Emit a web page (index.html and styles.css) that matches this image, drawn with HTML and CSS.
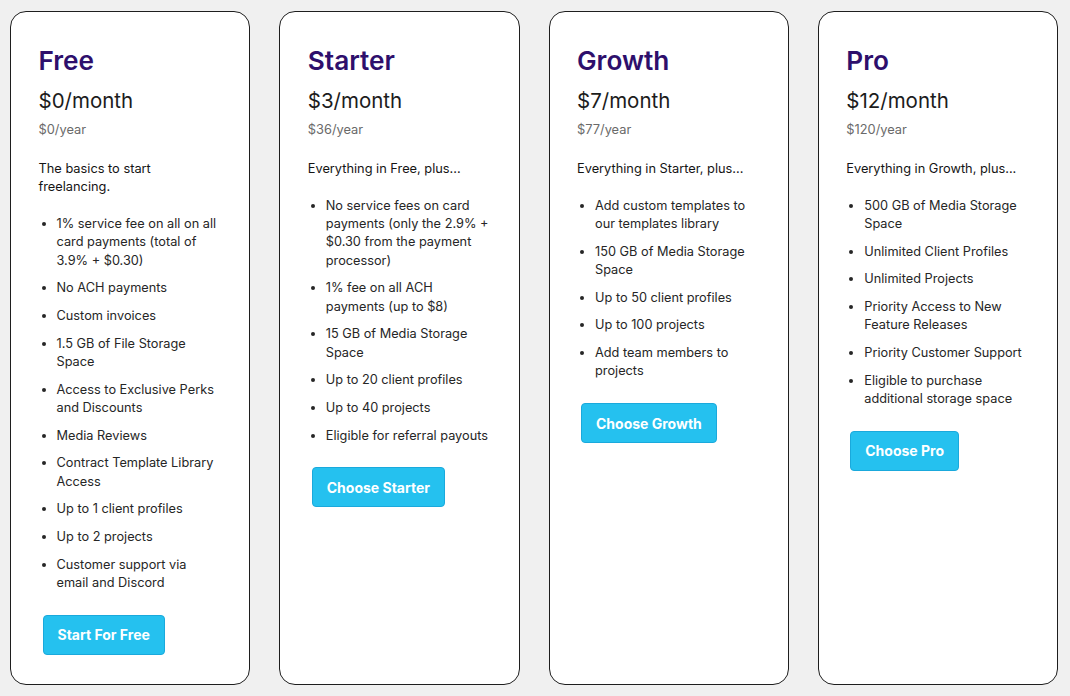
FILE: index.html
```html
<!DOCTYPE html>
<html lang="en">
<head>
<meta charset="utf-8">
<title>Pricing</title>
<link rel="stylesheet" href="styles.css">
</head>
<body>
<main class="plans">
  <section class="card">
    <h2 class="name">Free</h2>
    <p class="price">$0/month</p>
    <p class="year">$0/year</p>
    <p class="desc">The basics to start freelancing.</p>
    <ul class="features">
      <li>1% service fee on all on all card payments (total of 3.9% + $0.30)</li>
      <li>No ACH payments</li>
      <li>Custom invoices</li>
      <li>1.5 GB of File Storage Space</li>
      <li>Access to Exclusive Perks and Discounts</li>
      <li>Media Reviews</li>
      <li>Contract Template Library Access</li>
      <li>Up to 1 client profiles</li>
      <li>Up to 2 projects</li>
      <li>Customer support via email and Discord</li>
    </ul>
    <button class="cta">Start For Free</button>
  </section>
  <section class="card">
    <h2 class="name">Starter</h2>
    <p class="price">$3/month</p>
    <p class="year">$36/year</p>
    <p class="desc">Everything in Free, plus...</p>
    <ul class="features">
      <li>No service fees on card payments (only the 2.9% + $0.30 from the payment processor)</li>
      <li>1% fee on all ACH payments (up to $8)</li>
      <li>15 GB of Media Storage Space</li>
      <li>Up to 20 client profiles</li>
      <li>Up to 40 projects</li>
      <li>Eligible for referral payouts</li>
    </ul>
    <button class="cta">Choose Starter</button>
  </section>
  <section class="card">
    <h2 class="name">Growth</h2>
    <p class="price">$7/month</p>
    <p class="year">$77/year</p>
    <p class="desc">Everything in Starter, plus...</p>
    <ul class="features">
      <li>Add custom templates to our templates library</li>
      <li>150 GB of Media Storage Space</li>
      <li>Up to 50 client profiles</li>
      <li>Up to 100 projects</li>
      <li>Add team members to projects</li>
    </ul>
    <button class="cta">Choose Growth</button>
  </section>
  <section class="card">
    <h2 class="name">Pro</h2>
    <p class="price">$12/month</p>
    <p class="year">$120/year</p>
    <p class="desc">Everything in Growth, plus...</p>
    <ul class="features">
      <li>500 GB of Media Storage Space</li>
      <li>Unlimited Client Profiles</li>
      <li>Unlimited Projects</li>
      <li>Priority Access to New Feature Releases</li>
      <li>Priority Customer Support</li>
      <li>Eligible to purchase additional storage space</li>
    </ul>
    <button class="cta">Choose Pro</button>
  </section>
</main>
</body>
</html>
```
FILE: styles.css
```css
* { box-sizing: border-box; }

html, body {
  margin: 0;
  background: #f0f0f0;
}

body {
  font-family: Inter, "Noto Sans", Arial, sans-serif;
  color: #1c1c1c;
}

.plans {
  display: grid;
  grid-template-columns: repeat(4, 1fr);
  gap: 29px;
  padding: 11px 12px 11px 10px;
  height: 696px;
}

.card {
  background: #ffffff;
  border: 1.5px solid #1e1e1e;
  border-radius: 16px;
  padding: 32px 28px 20px 27.5px;
  display: flex;
  flex-direction: column;
  align-items: flex-start;
}

.name {
  margin: 0;
  font-size: 26.2px;
  line-height: 34px;
  font-weight: 600;
  color: #2e0f6c;
}

.price {
  margin: 9px 0 0;
  font-size: 20.5px;
  line-height: 28px;
  font-weight: 400;
  color: #1c1c1c;
}

.year {
  margin: 6px 0 0;
  font-size: 12.85px;
  line-height: 18px;
  color: #6a6a6a;
}

.desc {
  margin: 21px 0 18.5px;
  font-size: 12.8px;
  line-height: 18.3px;
  color: #141414;
}

.features {
  margin: 0;
  padding: 0 0 0 18px;
  font-size: 12.75px;
  line-height: 18.3px;
  color: #262626;
}

.features li {
  margin: 0 0 9.4px;
}

.cta {
  margin: 13px 0 0 4px;
  height: 40px;
  padding: 0 14px;
  background: #25c1ef;
  border: 1px solid #1aa9dc;
  border-radius: 4px;
  color: #ffffff;
  font-family: Inter, "Noto Sans", Arial, sans-serif;
  font-size: 14px;
  font-weight: 700;
  cursor: pointer;
}
```
